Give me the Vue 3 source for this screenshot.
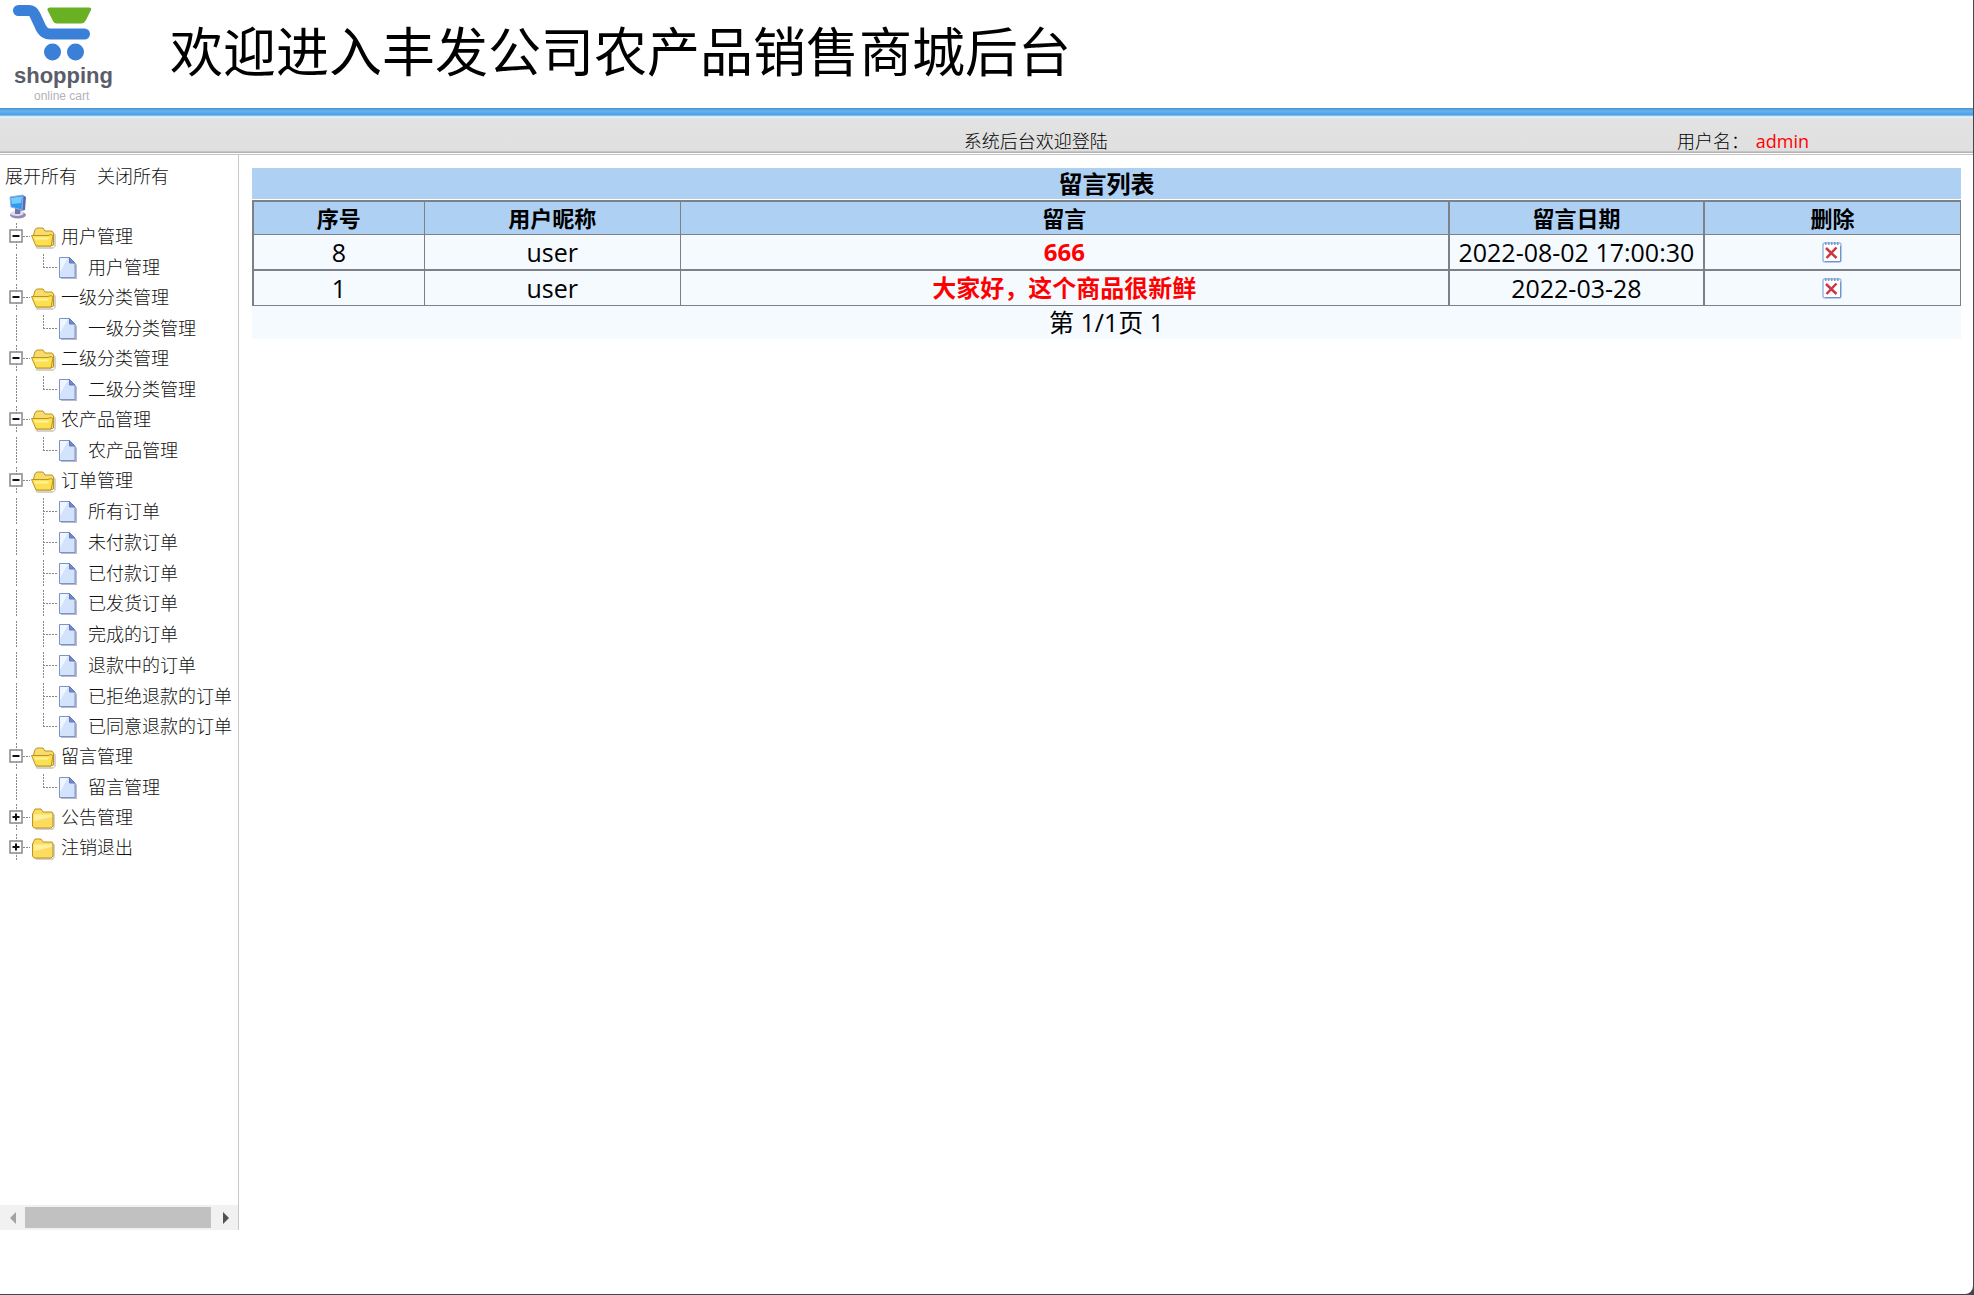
<script setup>
import { ref } from 'vue'

const groups = ref([
  { name: '用户管理', open: true, items: ['用户管理'] },
  { name: '一级分类管理', open: true, items: ['一级分类管理'] },
  { name: '二级分类管理', open: true, items: ['二级分类管理'] },
  { name: '农产品管理', open: true, items: ['农产品管理'] },
  {
    name: '订单管理',
    open: true,
    items: [
      '所有订单',
      '未付款订单',
      '已付款订单',
      '已发货订单',
      '完成的订单',
      '退款中的订单',
      '已拒绝退款的订单',
      '已同意退款的订单'
    ]
  },
  { name: '留言管理', open: true, items: ['留言管理'] },
  { name: '公告管理', open: false, items: ['公告管理'] },
  { name: '注销退出', open: false, items: ['注销退出'] }
])

const messages = ref([
  { id: 8, user: 'user', content: '666', date: '2022-08-02 17:00:30' },
  { id: 1, user: 'user', content: '大家好，这个商品很新鲜', date: '2022-03-28' }
])

function setAll(open) {
  groups.value.forEach(g => { g.open = open })
}

function remove(id) {
  messages.value = messages.value.filter(m => m.id !== id)
}
</script>

<template>
  <div class="page">
    <header class="header">
      <svg class="logo" width="120" height="104" viewBox="0 0 120 104">
        <path d="M18.500 10.500H29Q33 10.500 35 15L41 28Q44 34 50 34H84.500" fill="none" stroke="#3a80d8" stroke-width="11" stroke-linecap="round" stroke-linejoin="round" />
        <path d="M50 7.500H89Q92 7.500 91 10L86 20Q84 23.500 81 23.500H57Q54 23.500 53 21L47.500 10Q47 7.500 50 7.500Z" fill="#6ab023" />
        <circle cx="52.500" cy="52" r="8.500" fill="#3a80d8" />
        <circle cx="75.500" cy="52" r="8.500" fill="#3a80d8" />
        <text x="14" y="83" class="logo-name">shopping</text>
        <text x="34" y="100" class="logo-sub">online cart</text>
      </svg>
      <h1>欢迎进入丰发公司农产品销售商城后台</h1>
    </header>

    <div class="info">
      <span class="welcome">系统后台欢迎登陆</span>
      <span class="who">用户名： <b>admin</b></span>
    </div>

    <div class="body">
      <aside class="side">
        <nav class="menu">
          <div class="tools">
            <a href="#" @click.prevent="setAll(true)">展开所有</a>
            <a href="#" @click.prevent="setAll(false)">关闭所有</a>
          </div>

          <div class="root">
            <svg width="27" height="26" viewBox="0 0 27 26">
              <ellipse cx="15" cy="22" rx="8" ry="3.500" fill="#8f8bb4" />
              <ellipse cx="14" cy="20.500" rx="6.500" ry="2.500" fill="#dddbee" />
              <path d="M12 15L18 16L17 21H12Z" fill="#77739f" />
              <path d="M20 2L23 4L22 17L18 18Z" fill="#5a68ad" />
              <path d="M7 4L20 2L19 17L8 14Z" fill="#2d9af0" stroke="#8fb0e3" />
              <path d="M8 5L19 3.500L18 10L9 11Z" fill="#78cbff" />
            </svg>
          </div>

          <ul class="tree">
            <li v-for="(g, i) in groups" :key="g.name">
              <div class="row folder">
                <button class="toggle" :aria-label="g.name" :aria-expanded="g.open" @click="g.open = !g.open">
                  <svg width="27" height="26" viewBox="0 0 27 26">
                    <path d="M13.500 0V26" class="dots" />
                    <path d="M20 13.500H27" class="dots" />
                    <rect x="7" y="7" width="12" height="12" fill="#fff" stroke="#888" stroke-width="1.500" />
                    <path d="M9.500 13H16.500" stroke="#111" stroke-width="2" />
                    <path v-if="!g.open" d="M13 9.500V16.500" stroke="#111" stroke-width="2" />
                  </svg>
                </button>
                <svg v-if="g.open" width="27" height="26" viewBox="1 0 27 26">
                  <path d="M6 24H25V10L27 12V23L24 26H8Z" fill="#b9b2a8" opacity=".6" />
                  <path d="M4.500 12L6 6.500L8 5H14L16 8H23L24.500 10V22L22 23H7Z" fill="#f7dc6c" stroke="#bd9220" />
                  <path d="M2.500 12.500H19L22 11.500L24 13L22 23H7Z" fill="#fbe151" stroke="#bd9220" />
                  <path d="M5 14.500H20L19 16.500H6Z" fill="#fff3a0" />
                </svg>
                <svg v-else width="27" height="26" viewBox="0 0 27 26">
                  <path d="M5 24H23V9L25 11V23L23 26H6Z" fill="#b9b2a8" opacity=".6" />
                  <path d="M3 9L5 5H11L13 8H22L23 10V22L21 24H4L2.500 22V10Z" fill="#fbdc5e" stroke="#bd9220" />
                  <path d="M4 10.500H22V13L4 17Z" fill="#fff0a0" />
                </svg>
                <a href="#" @click.prevent="g.open = !g.open">{{ g.name }}</a>
              </div>

              <ul v-if="g.open" class="tree">
                <li v-for="(item, n) in g.items" :key="item" class="row leaf">
                  <svg width="27" height="26" viewBox="0 0 27 26">
                    <path v-if="i < groups.length - 1" d="M13.500 0V26" class="dots" />
                  </svg>
                  <svg width="27" height="26" viewBox="0 0 27 26">
                    <path :d="n < g.items.length - 1 ? 'M13.500 0V26' : 'M13.500 0V13'" class="dots" />
                    <path d="M13 13.500H27" class="dots" />
                  </svg>
                  <svg width="27" height="26" viewBox="0 0 27 26">
                    <path d="M4 24H18V9L20 11V25H4Z" fill="#9a9cb5" opacity=".7" />
                    <path d="M2.500 3.500H12.500L18 9V23.500H2.500Z" fill="#d3e3fc" stroke="#7d92c8" />
                    <path d="M3 4H11L3 18Z" fill="#f0f6ff" />
                    <path d="M12.500 3.500L18 9H12.500Z" fill="#7288cc" stroke="#6478b8" />
                  </svg>
                  <a href="#" @click.prevent>{{ item }}</a>
                </li>
              </ul>
            </li>
          </ul>
        </nav>

        <div class="scroll">
          <button aria-label="向左">
            <svg width="6" height="12" viewBox="0 0 6 12"><path d="M6 0V12L0 6Z" fill="#a3a3a3" /></svg>
          </button>
          <div class="thumb"></div>
          <button aria-label="向右">
            <svg width="6" height="12" viewBox="0 0 6 12"><path d="M0 0V12L6 6Z" fill="#505050" /></svg>
          </button>
        </div>
      </aside>

      <main class="main">
        <h2>留言列表</h2>
        <table>
          <colgroup>
            <col class="c-id">
            <col class="c-mid">
            <col class="c-msg">
            <col class="c-mid">
            <col class="c-mid">
          </colgroup>
          <thead>
            <tr>
              <th>序号</th>
              <th>用户昵称</th>
              <th>留言</th>
              <th class="date">留言日期</th>
              <th>删除</th>
            </tr>
          </thead>
          <tbody>
            <tr v-for="m in messages" :key="m.id">
              <td>{{ m.id }}</td>
              <td>{{ m.user }}</td>
              <td class="msg">{{ m.content }}</td>
              <td class="date">{{ m.date }}</td>
              <td>
                <button class="del" aria-label="删除" @click="remove(m.id)">
                  <svg width="20" height="22" viewBox="0 0 20 22">
                    <rect x="1" y="2" width="18" height="19" rx="2" fill="#fff" stroke="#9dbbe4" stroke-width="1.500" />
                    <path d="M3 20.500H18.500V5" fill="none" stroke="#6f94cb" />
                    <path d="M3 2.500H18" stroke="#7f9cc8" stroke-width="3" stroke-dasharray="1.500 1.500" />
                    <path d="M4 7L14.500 17M14.500 6.500L4.500 17" fill="none" stroke="#cf3444" stroke-width="2.500" />
                  </svg>
                </button>
              </td>
            </tr>
          </tbody>
        </table>
        <div class="pager">第 1/1页 1</div>
      </main>
    </div>
  </div>
</template>

<style>
body {
  background: #454550;
}
</style>

<style scoped>
.page {
  box-sizing: border-box;
  min-height: calc(100vh - 1px);
  margin: 0 1px 1px 0;
  display: flex;
  flex-direction: column;
  background: #fff;
  border-bottom-right-radius: 8px;
  font-family: "Open Sans", "Noto Sans CJK SC", sans-serif;
  font-size: 24px;
  color: #000;
}

a {
  color: #111;
  text-decoration: none;
}

button {
  border: none;
  background: none;
  padding: 0;
  cursor: pointer;
}

svg {
  display: block;
  flex: none;
}

.header {
  height: 108px;
  display: flex;
  align-items: flex-start;
}

.logo {
  margin-right: 50px;
}

.logo-name {
  font: 700 22px "Liberation Sans", sans-serif;
  fill: #5a5c6a;
}

.logo-sub {
  font: 12px "Liberation Sans", sans-serif;
  fill: #b4b2ba;
}

h1 {
  margin: 12px 0 0;
  font-size: 53px;
  line-height: 80px;
  font-weight: 400;
  white-space: nowrap;
}

.info {
  height: 47px;
  box-sizing: border-box;
  padding-top: 19px;
  display: grid;
  grid-template-columns: 20fr 65fr 15fr;
  background: linear-gradient(#4a90d0 0, #66b2ee 3px, #4a9fe4 7px, #b8dcf5 8px, #eaf2f8 9px, #e2e2e2 11px, #e0e0e0 43px, #aaa 44px, #bbb 45px, #fff 45px, #fff 46px, #c4c4c4 46px);
  font-size: 18px;
  font-weight: 300;
  line-height: 28px;
}

.welcome {
  grid-column: 2;
  text-align: center;
}

.who {
  white-space: pre;
}

.who b {
  padding-left: 2px;
  font-weight: 400;
  color: #f00;
}

.body {
  flex: 1;
  display: flex;
  padding-bottom: 64px;
}

.side {
  width: 238px;
  flex: none;
  display: flex;
  flex-direction: column;
  border-right: 1px solid #c8c8c8;
  font-size: 18px;
  font-weight: 300;
}

.menu {
  flex: 1;
  padding: 5px 0 0 3px;
}

.tools {
  height: 30px;
  display: flex;
  align-items: center;
  gap: 20px;
  padding-left: 2px;
}

.root {
  height: 31px;
  display: flex;
  align-items: center;
}

.tree {
  list-style: none;
  margin: 0;
  padding: 0;
}

.row {
  display: flex;
  align-items: center;
  white-space: nowrap;
}

.folder {
  height: 30px;
}

.leaf {
  height: 31px;
}

.leaf:nth-child(4n) {
  height: 30px;
}

.row a {
  padding-left: 4px;
  line-height: 30px;
}

.dots {
  fill: none;
  stroke: #888;
  stroke-dasharray: 2 1;
}

.scroll {
  height: 25px;
  display: flex;
  align-items: center;
  background: #f1f1f1;
}

.scroll button {
  width: 25px;
  display: flex;
  justify-content: center;
}

.thumb {
  flex: 1;
  height: 21px;
  margin-right: 2px;
  background: #c1c1c1;
}

.main {
  flex: 1;
  padding: 13px 12px 0 13px;
  text-align: center;
}

h2 {
  margin: 0 0 1px;
  height: 31px;
  background: #aed0f3;
  font-size: 24px;
  line-height: 32px;
}

table {
  width: 100%;
  table-layout: fixed;
  border-collapse: separate;
  border-spacing: 0;
  border-top: 2px solid #7d8187;
  border-left: 2px solid #7d8187;
}

.c-id {
  width: 10%;
}

.c-mid {
  width: 15%;
}

.c-msg {
  width: 45%;
}

th,
td {
  padding: 0;
  border-right: 1px solid #7d8187;
  border-bottom: 1px solid #7d8187;
  white-space: nowrap;
}

th {
  height: 32px;
  background: #aed0f3;
  font-size: 22px;
  line-height: 32px;
}

td {
  height: 34px;
  background: #f5faff;
  font-size: 25px;
  line-height: 34px;
}

tbody tr:not(:last-child) td {
  border-bottom-width: 2px;
}

.date {
  border-left: 1px solid #7d8187;
  border-right-width: 2px;
}

.msg {
  color: #f00;
  font-size: 24px;
  font-weight: 700;
}

.del {
  display: block;
  margin: 0 auto;
}

.pager {
  height: 33px;
  background: #f5faff;
  font-size: 25px;
  line-height: 33px;
}
</style>
